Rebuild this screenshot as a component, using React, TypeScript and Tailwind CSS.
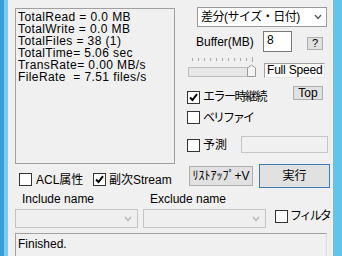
import React from "react";

const Check = ({ checked }: { checked?: boolean }) => (
  <span className="w-[13px] h-[13px] border border-[#333] bg-white flex items-center justify-center shrink-0">
    {checked && (
      <svg width="9" height="9" viewBox="0 0 9 9">
        <path d="M1 4.5 L3.5 7 L8 1.2" stroke="#000" strokeWidth="2" fill="none" />
      </svg>
    )}
  </span>
);

const Chevron = ({ color }: { color: string }) => (
  <svg width="8" height="6" viewBox="0 0 8 6" className="shrink-0">
    <path d="M1 1 L4 4.5 L7 1" stroke={color} strokeWidth="1.3" fill="none" />
  </svg>
);

export default function App() {
  const stats = [
    "TotalRead = 0.0 MB",
    "TotalWrite = 0.0 MB",
    "TotalFiles = 38 (1)",
    "TotalTime= 5.06 sec",
    "TransRate= 0.00 MB/s",
    "FileRate  = 7.51 files/s",
  ];

  return (
    <div className="w-[342px] h-[256px] flex overflow-hidden bg-[#f0f0f0] text-black text-[12px] leading-[14px] font-['Liberation_Sans','Noto_Sans_CJK_JP',sans-serif]">
      {/* left edge of desktop */}
      <div className="w-[4px] bg-[#3a9fd6]" />
      <div className="w-[4px] bg-[#7ccbee]" />

      <div className="w-[325px] flex flex-col">
        <div className="flex items-start">
          {/* left column */}
          <div className="ml-[7px] w-[160px] flex flex-col">
            <div className="mt-[8px] h-[156px] border border-[#a0a0a0] pl-[2px] pt-[2px]">
              {stats.map((s, i) => (
                <div key={i} className="whitespace-pre h-[12px] leading-[12px] tracking-[0.4px]">
                  {s}
                </div>
              ))}
            </div>
            <div className="mt-[9px] h-[13px] flex items-center">
              <div className="w-[78px] pl-[4px] flex items-center gap-[4px]">
                <Check />
                <span className="whitespace-nowrap">ACL属性</span>
              </div>
              <div className="flex items-center gap-[3px]">
                <Check checked />
                <span className="whitespace-nowrap">副次Stream</span>
              </div>
            </div>
          </div>

          {/* right column */}
          <div className="ml-[12px] w-[143px] flex flex-col">
            <div className="mt-[7px] ml-[10px] w-[130px] h-[20px] bg-white border border-[#9a9a9a] flex items-center pl-[3px] pr-[4px]">
              <span className="flex-1 whitespace-nowrap tracking-[-0.5px]">差分(サイズ・日付)</span>
              <Chevron color="#555" />
            </div>

            <div className="mt-[4px] h-[21px] flex items-center">
              <span className="ml-[9px] w-[67px]">Buffer(MB)</span>
              <div className="w-[29px] h-[21px] bg-white border border-[#7a7a7a] pl-[3px] pt-[1px]">8</div>
              <div className="ml-[15px] mt-[3px] w-[16px] h-[13px] bg-[#e1e1e1] border border-[#adadad] flex items-center justify-center text-[11px] leading-none">
                ?
              </div>
            </div>

            <div className="mt-[5px] h-[20px] flex items-start">
              <svg width="68" height="20" viewBox="0 0 68 20" className="ml-[1px] shrink-0">
                {Array.from({ length: 11 }).map((_, i) => (
                  <line key={i} x1={4 + i * 6 + 0.5} y1={1} x2={4 + i * 6 + 0.5} y2={4} stroke="#a8a8a8" />
                ))}
                <line x1={64.5} y1={0} x2={64.5} y2={5} stroke="#a8a8a8" />
                <rect x="0.5" y="10.5" width="59" height="9" fill="#e7e7e7" stroke="#bdbdbd" />
                <path d="M59.5 19.5 V11 L63.5 8 L67.5 11 V19.5 Z" fill="#f4f4f4" stroke="#9a9a9a" />
              </svg>
              <div className="ml-[8px] mt-[6px] w-[61px] h-[15px] overflow-hidden whitespace-nowrap bg-[#fbfbfb] border-t border-l border-[#a0a0a0] border-r border-b border-r-[#e8e8e8] border-b-[#e8e8e8] pl-[2px] leading-[13px] tracking-[-0.2px]">
                Full Speed
              </div>
            </div>

            <div className="mt-[9px] h-[16px] flex items-start">
              <div className="mt-[4px] flex items-center gap-[3px]">
                <Check checked />
                <span className="whitespace-nowrap tracking-[-1.5px]">エラー時継続</span>
              </div>
              <div className="ml-auto mr-[7px] w-[30px] h-[14px] bg-[#e1e1e1] border border-[#adadad] flex items-center justify-center leading-none">
                Top
              </div>
            </div>

            <div className="mt-[9px] h-[13px] flex items-center gap-[3px]">
              <Check />
              <span className="whitespace-nowrap tracking-[-2px]">ベリファイ</span>
            </div>

            <div className="mt-[12px] h-[17px] flex items-start">
              <div className="mt-[2px] w-[54px] flex items-center gap-[3px]">
                <Check />
                <span className="whitespace-nowrap">予測</span>
              </div>
              <div className="w-[87px] h-[17px] bg-[#f0f0f0] border border-[#c4c4c4]" />
            </div>

            <div className="mt-[11px] h-[24px] flex items-start">
              <div className="ml-[2px] mt-[2px] w-[64px] h-[20px] bg-[#e1e1e1] border border-[#adadad] flex items-center justify-center whitespace-nowrap">
                ﾘｽﾄｱｯﾌﾟ+V
              </div>
              <div className="ml-[6px] w-[71px] h-[24px] bg-[#e1e1e1] border border-[#3d7ab8] flex items-center justify-center">
                実行
              </div>
            </div>
          </div>
        </div>

        {/* filter labels */}
        <div className="mt-[4px] h-[14px] flex items-center">
          <span className="ml-[14px] w-[128px]">Include name</span>
          <span>Exclude name</span>
        </div>

        {/* filter combos */}
        <div className="mt-[3px] h-[19px] flex items-start">
          <div className="ml-[7px] w-[123px] h-[19px] bg-[#efefef] border border-[#c4c4c4] flex items-center justify-end pr-[5px] shrink-0">
            <Chevron color="#b5b5b5" />
          </div>
          <div className="ml-[5px] w-[123px] h-[19px] bg-[#efefef] border border-[#c4c4c4] flex items-center justify-end pr-[5px] shrink-0">
            <Chevron color="#b5b5b5" />
          </div>
          <div className="ml-[9px] flex items-center gap-[2px] shrink-0">
            <Check />
            <span className="whitespace-nowrap tracking-[-2px]">フィルタ</span>
          </div>
        </div>

        {/* status */}
        <div className="mt-[5px] ml-[7px] w-[312px] h-[40px] border-t border-l border-[#a0a0a0] border-r border-r-[#dcdcdc] pl-[2px] pt-[3px] shrink-0">
          Finished.
        </div>
      </div>

      {/* right edge of desktop */}
      <div className="w-[9px] bg-[#62c4ea]" />
    </div>
  );
}
